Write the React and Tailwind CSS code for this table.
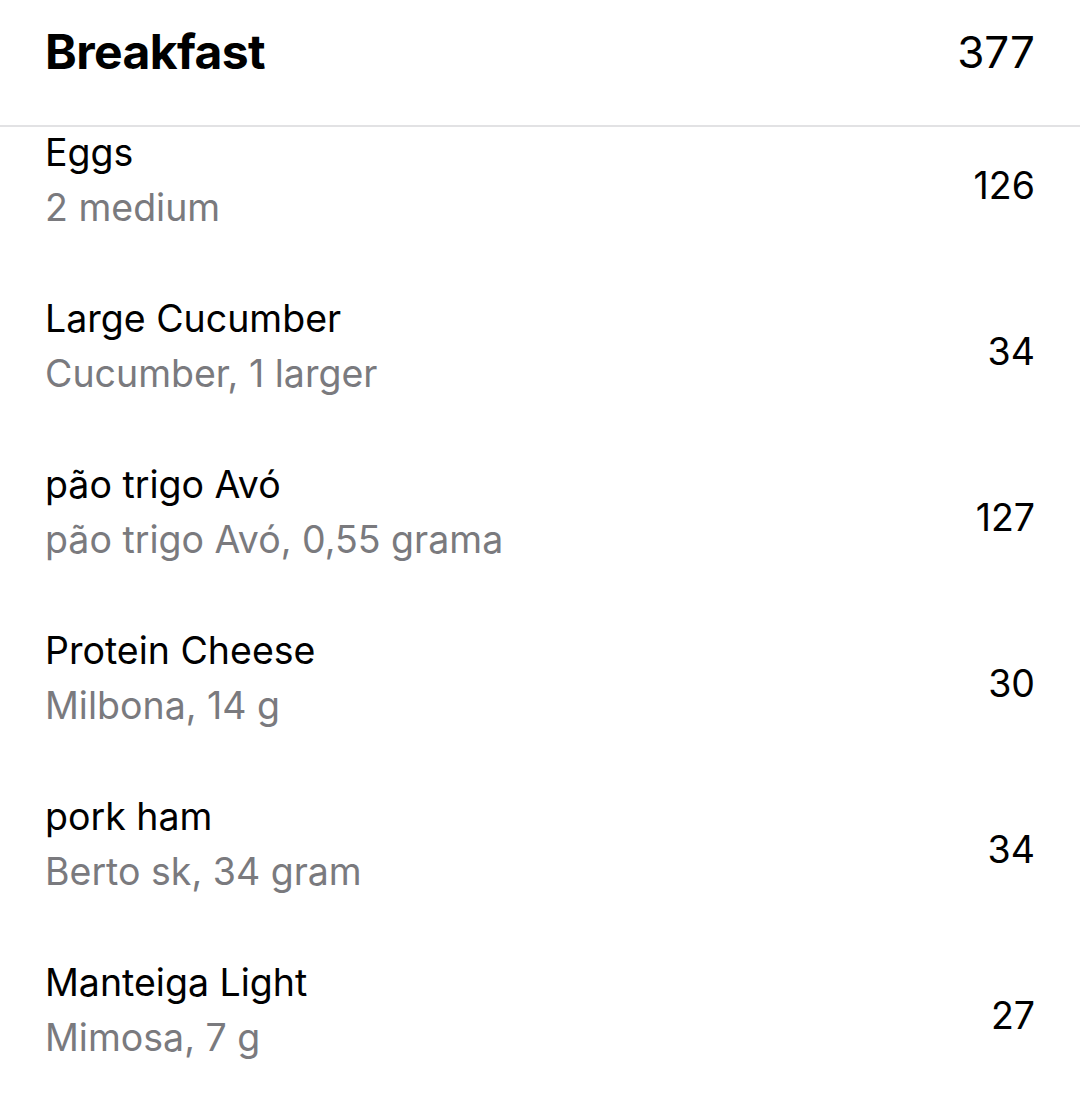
const items = [
  { name: 'Eggs', detail: '2 medium', kcal: 126 },
  { name: 'Large Cucumber', detail: 'Cucumber, 1 larger', kcal: 34 },
  { name: 'pão trigo Avó', detail: 'pão trigo Avó, 0,55 grama', kcal: 127 },
  { name: 'Protein Cheese', detail: 'Milbona, 14 g', kcal: 30 },
  { name: 'pork ham', detail: 'Berto sk, 34 gram', kcal: 34 },
  { name: 'Manteiga Light', detail: 'Mimosa, 7 g', kcal: 27 },
];

// shown total comes from unrounded values, so it is not the plain sum
const TOTAL = 377;

function FoodRow({ item }) {
  return (
    <div className="flex items-center justify-between">
      <div className="flex flex-col gap-[11px]">
        <span className="text-[37.5px] leading-[44px] text-black">{item.name}</span>
        <span className="text-[37.5px] leading-[44px] text-[#7a7a7e]">{item.detail}</span>
      </div>
      <span className="mt-[11px] text-[37.5px] leading-[44px] text-black">{item.kcal}</span>
    </div>
  );
}

export default function App() {
  return (
    <div className="min-h-screen bg-white font-['Inter','Noto_Sans',sans-serif]">
      <div className="flex h-[127px] items-start justify-between border-b-2 border-[#e2e2e4] pl-[45px] pr-[45px] pt-[22px]">
        <h1 className="text-[48px] font-bold leading-[60px] tracking-[-0.6px] text-black">Breakfast</h1>
        <span className="text-[44px] leading-[60px] text-black">{TOTAL}</span>
      </div>
      <div className="flex flex-col gap-[67px] pl-[45px] pr-[45px] pt-[4px]">
        {items.map((item) => (
          <FoodRow key={item.name} item={item} />
        ))}
      </div>
    </div>
  );
}
